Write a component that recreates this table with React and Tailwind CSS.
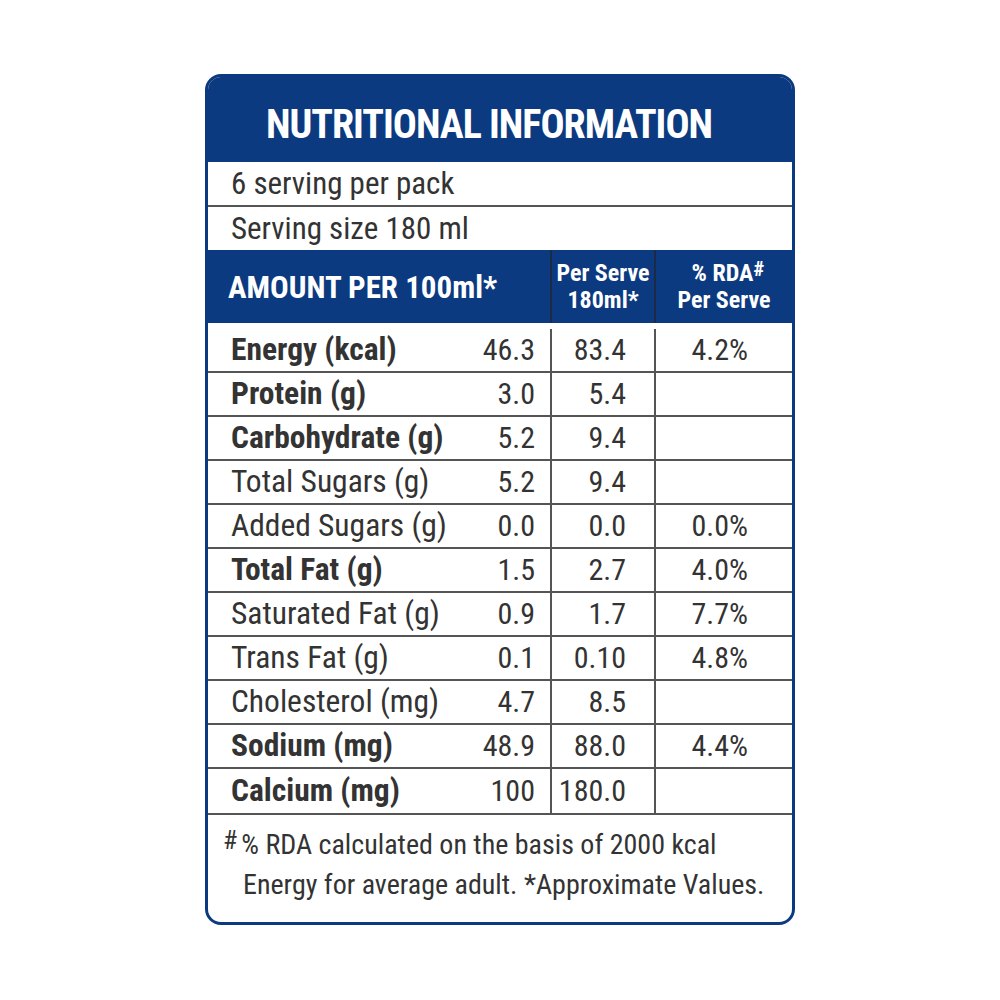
import React from 'react';

const navy = 'bg-[#0c3a80]';

const rows = [
  { label: 'Energy (kcal)', bold: true, a: '46.3', b: '83.4', c: '4.2%', first: true },
  { label: 'Protein (g)', bold: true, a: '3.0', b: '5.4', c: '' },
  { label: 'Carbohydrate (g)', bold: true, a: '5.2', b: '9.4', c: '' },
  { label: 'Total Sugars (g)', bold: false, a: '5.2', b: '9.4', c: '' },
  { label: 'Added Sugars (g)', bold: false, a: '0.0', b: '0.0', c: '0.0%' },
  { label: 'Total Fat (g)', bold: true, a: '1.5', b: '2.7', c: '4.0%' },
  { label: 'Saturated Fat (g)', bold: false, a: '0.9', b: '1.7', c: '7.7%' },
  { label: 'Trans Fat (g)', bold: false, a: '0.1', b: '0.10', c: '4.8%' },
  { label: 'Cholesterol (mg)', bold: false, a: '4.7', b: '8.5', c: '' },
  { label: 'Sodium (mg)', bold: true, a: '48.9', b: '88.0', c: '4.4%' },
  { label: 'Calcium (mg)', bold: true, a: '100', b: '180.0', c: '', last: true },
];

function App() {
  return (
    <div
      className="min-h-screen bg-white pt-[74px]"
      style={{ fontFamily: '"Roboto Condensed", "DejaVu Sans Condensed", "Liberation Sans Narrow", Roboto, sans-serif' }}
    >
      <div className="mx-auto w-[590px] h-[851px] rounded-[16px] border-[3px] border-[#0c3a80] overflow-hidden bg-white text-[#333333]">
        {/* Title */}
        <div className={`${navy} h-[85px] flex items-center justify-center pr-[22px] pt-[10px]`}>
          <h1 className="text-white font-bold text-[40px] leading-none tracking-[-1px]">NUTRITIONAL INFORMATION</h1>
        </div>

        {/* Serving info */}
        <div className="h-[45px] flex items-center pl-[23px] border-b-2 border-[#555555] text-[31px] leading-none">
          6 serving per pack
        </div>
        <div className="h-[43px] flex items-center pl-[23px] text-[31px] leading-none">
          Serving size 180 ml
        </div>

        {/* Header */}
        <div className={`${navy} h-[73px] grid grid-cols-[342px_104px_1fr] text-white font-bold`}>
          <div className="flex items-center pl-[20px] pt-[2px] text-[31px] leading-none">AMOUNT PER 100ml*</div>
          <div className="flex flex-col items-center justify-center border-l-2 border-[#1c2a45] text-[24px] leading-[27px]">
            <span>Per Serve</span>
            <span>180ml*</span>
          </div>
          <div className="flex flex-col items-center justify-center border-l-2 border-[#1c2a45] text-[24px] leading-[27px]">
            <span className="pl-[8px]">
              % RDA<span className="text-[21px] leading-none align-top relative top-[-1px]">#</span>
            </span>
            <span>Per Serve</span>
          </div>
        </div>

        {/* Nutrient rows */}
        {rows.map((r) => (
          <div
            key={r.label}
            className={`grid grid-cols-[342px_104px_1fr] text-[30px] leading-none border-b-2 border-[#555555] ${
              r.first ? 'h-[50px] pt-[6px]' : r.last ? 'h-[46px]' : 'h-[44px]'
            }`}
          >
            <div className="flex items-center justify-between pl-[23px] pr-[15px]">
              <span className={`text-[31.5px] ${r.bold ? 'font-bold' : ''}`}>{r.label}</span>
              <span>{r.a}</span>
            </div>
            <div className="flex items-center justify-end pr-[28px] border-l-2 border-[#555555]">{r.b}</div>
            <div className="flex items-center justify-end pr-[44px] border-l-2 border-[#555555]">{r.c}</div>
          </div>
        ))}

        {/* Footnote */}
        <div className="pt-[10px] pl-[15px] text-[28px] leading-[40px]">
          <p>
            <span className="text-[26px] leading-none align-top relative top-[2px] mr-[4px]">#</span>% RDA calculated on the basis of 2000 kcal
          </p>
          <p className="pl-[20px]">Energy for average adult. *Approximate Values.</p>
        </div>
      </div>
    </div>
  );
}

export default App;
